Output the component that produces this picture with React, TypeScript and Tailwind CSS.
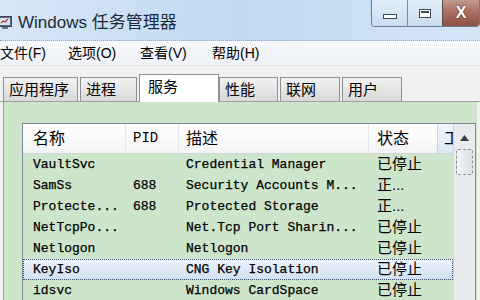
import React from 'react';

type Row = { name: string; pid: string; desc: string; status: string };

const rows: Row[] = [
  { name: 'VaultSvc', pid: '', desc: 'Credential Manager', status: '已停止' },
  { name: 'SamSs', pid: '688', desc: 'Security Accounts M...', status: '正...' },
  { name: 'Protecte...', pid: '688', desc: 'Protected Storage', status: '正...' },
  { name: 'NetTcpPo...', pid: '', desc: 'Net.Tcp Port Sharin...', status: '已停止' },
  { name: 'Netlogon', pid: '', desc: 'Netlogon', status: '已停止' },
  { name: 'KeyIso', pid: '', desc: 'CNG Key Isolation', status: '已停止' },
  { name: 'idsvc', pid: '', desc: 'Windows CardSpace', status: '已停止' },
];

const tabs = ['应用程序', '进程', '服务', '性能', '联网', '用户'];
const tabW = ['w-[75px]', 'w-[57px]', 'w-[80px]', 'w-[59px]', 'w-[60px]', 'w-[60px]'];

const ui = "font-['Liberation_Sans','Noto_Sans_CJK_SC',sans-serif]";
const mono = "font-['Liberation_Mono','Noto_Sans_CJK_SC',monospace]";

export default function App() {
  return (
    <div className={`w-[480px] h-[300px] overflow-hidden bg-[#f0f0f0] flex flex-col text-black ${ui}`}>
      {/* 标题栏 */}
      <div className="h-[41px] shrink-0 flex bg-gradient-to-r from-[#d6e6f6] via-[#c3daf2] to-[#d4e5f6] border-b border-dotted border-[#9aa9b8]">
        <div className="flex items-center pt-[5px]">
          <svg width="14" height="16" viewBox="0 0 14 16" className="-ml-[2px]">
            <rect x="0.5" y="1.5" width="13" height="10" fill="#5a6b7e" stroke="#3b4654" />
            <rect x="2" y="3" width="10" height="7" fill="#cfe2f3" />
            <path d="M3 8 L5 6 L7 7 L10 4" stroke="#c0392b" strokeWidth="1.2" fill="none" />
            <rect x="4" y="12" width="6" height="2" fill="#6b7785" />
          </svg>
          <span className="ml-[6px] text-[17px] text-[#1b2a3a]">Windows 任务管理器</span>
        </div>
        <div className="ml-auto flex h-[27px] border border-t-0 border-[#6d7c8c] rounded-b-[4px] overflow-hidden">
          <div className="w-[36px] bg-gradient-to-b from-[#e4eef9] to-[#c9dcf0] border-r border-[#7e8d9c] flex items-center justify-center">
            <div className="w-[14px] h-[5px] bg-white border border-[#3c4856] mt-[6px]" />
          </div>
          <div className="w-[35px] bg-gradient-to-b from-[#e4eef9] to-[#c9dcf0] border-r border-[#5d4a46] flex items-center justify-center">
            <div className="w-[12px] h-[9px] bg-white border border-[#3c4856] p-[1px]">
              <div className="w-full h-full border-t-2 border-[#3c4856]" />
            </div>
          </div>
          <div className="w-[36px] bg-gradient-to-b from-[#c39a91] via-[#a86b5f] to-[#8e5246] flex items-center justify-center">
            <span className="text-white font-bold text-[16px] leading-none [text-shadow:0_0_2px_#3a1a14]">X</span>
          </div>
        </div>
      </div>

      {/* 菜单栏 */}
      <div className="h-[25px] shrink-0 flex items-center text-[14px] bg-gradient-to-b from-[#f7f9fc] to-[#eef1f5] border-b border-[#e2e6ea]">
        <span className="w-[68px]">文件(F)</span>
        <span className="w-[72px]">选项(O)</span>
        <span className="w-[72px]">查看(V)</span>
        <span>帮助(H)</span>
      </div>

      {/* 选项卡 */}
      <div className="h-[36px] shrink-0 flex items-end pl-[3px] border-b border-[#a0a0a0] relative z-10">
        {tabs.map((t, i) =>
          i === 2 ? (
            <div key={t} className={`${tabW[i]} h-[28px] -mb-px bg-white border border-b-0 border-[#8e8f8f] text-[15px] pl-[8px] pt-[1px]`}>
              {t}
            </div>
          ) : (
            <div key={t} className={`${tabW[i]} h-[24px] mr-[2px] bg-gradient-to-b from-[#f2f2f2] to-[#d9d9d9] border border-b-0 border-[#8e8f8f] text-[15px] pl-[5px] leading-[23px]`}>
              {t}
            </div>
          ),
        )}
      </div>

      {/* 服务面板 */}
      <div className="flex-1 ml-[3px] mr-[3px] bg-[#cde6cb] pl-[18px] pt-[21px] pr-[1px] border-l border-[#a0a0a0]">
        <div className="flex border border-b-0 border-[#828790] bg-[#cde6cb] h-full">
          <div className="flex-1 min-w-0 overflow-hidden flex flex-col">
            {/* 表头 */}
            <div className="h-[30px] shrink-0 flex bg-gradient-to-b from-white to-[#f3f4f6] text-[16px] border-b border-[#d5d5d5]">
              <div className="w-[103px] shrink-0 pl-[10px] flex items-center border-r border-[#e3e5e8]">名称</div>
              <div className="w-[53px] shrink-0 pl-[7px] flex items-center border-r border-[#e3e5e8] font-['Liberation_Mono',monospace] text-[14px]">PID</div>
              <div className="w-[190px] shrink-0 pl-[7px] flex items-center border-r border-[#e3e5e8]">描述</div>
              <div className="w-[69px] shrink-0 pl-[8px] flex items-center border-r border-[#c0d8ef]">状态</div>
              <div className="flex-1 min-w-0 pl-[6px] flex items-center bg-gradient-to-b from-[#eef5fc] to-[#dbe9f7] overflow-hidden whitespace-nowrap">工</div>
            </div>
            {/* 数据行 */}
            {rows.map((r) => {
              const sel = r.name === 'KeyIso';
              return (
                <div
                  key={r.name}
                  className={`h-[21px] shrink-0 flex items-center text-[13px] text-black [-webkit-text-stroke:0.25px_#000] ${mono} ${
                    sel ? 'bg-gradient-to-b from-[#eef4fb] to-[#cfe0f3] outline-1 outline-dotted outline-[#3a4f6b] -outline-offset-1' : ''
                  }`}
                >
                  <div className="w-[103px] shrink-0 pl-[10px] whitespace-pre">{r.name}</div>
                  <div className="w-[53px] shrink-0 pl-[7px]">{r.pid}</div>
                  <div className="w-[190px] shrink-0 pl-[7px] whitespace-pre">{r.desc}</div>
                  <div className={`w-[69px] shrink-0 pl-[8px] ${ui} text-[15px] [-webkit-text-stroke:0px]`}>{r.status}</div>
                </div>
              );
            })}
          </div>
          {/* 滚动条 */}
          <div className="w-[22px] shrink-0 bg-[#e9ebee] border-l border-[#d0d3d8] flex flex-col items-center">
            <svg width="9" height="6" viewBox="0 0 9 6" className="mt-[11px]">
              <path d="M0 6 L4.5 0 L9 6 Z" fill="#3d3d3d" />
            </svg>
            <div className="mt-[8px] w-[17px] h-[26px] border border-dashed border-[#8a8f96] rounded-[2px] bg-gradient-to-r from-[#f4f5f7] to-[#dcdfe3]" />
          </div>
        </div>
      </div>
    </div>
  );
}
